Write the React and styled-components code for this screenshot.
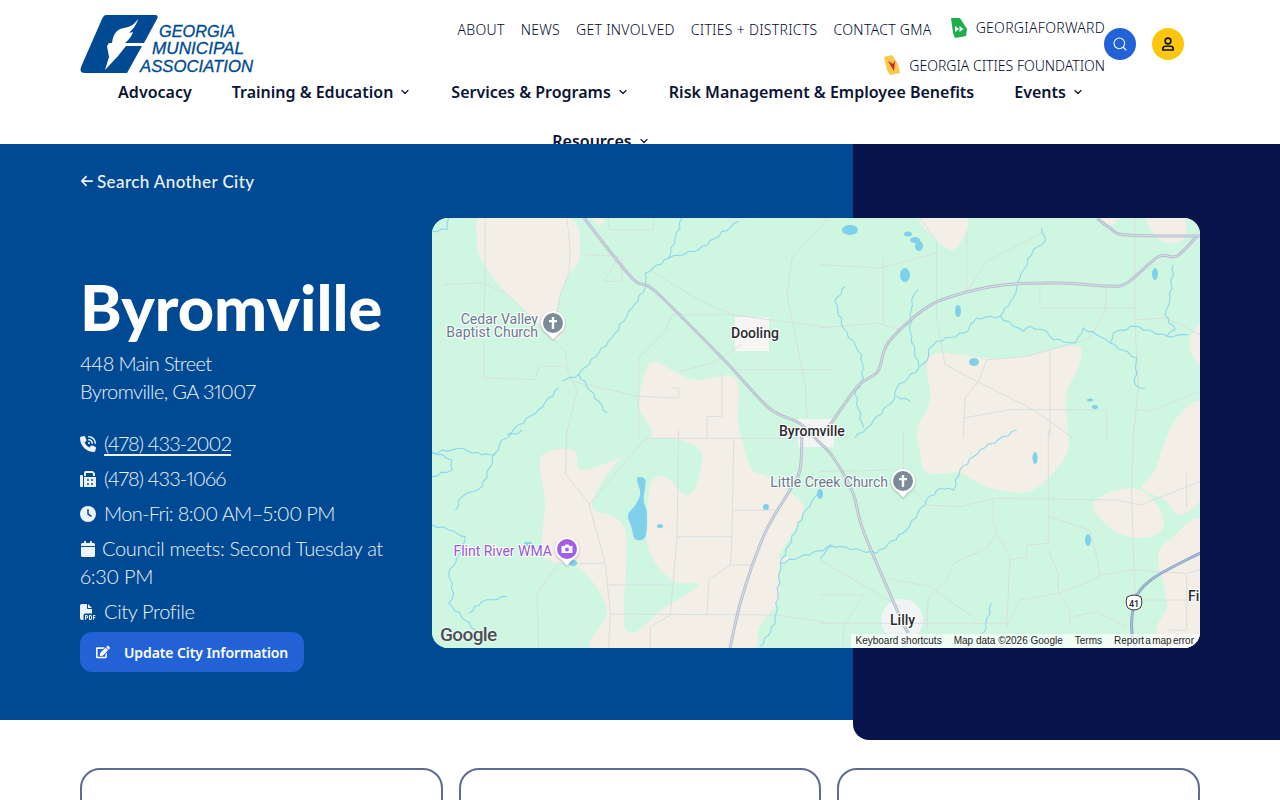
import styled, { createGlobalStyle } from 'styled-components';
import { ChevronDown, Search } from 'lucide-react';
import { FaEdit } from 'react-icons/fa';
import {
  FaArrowLeft,
  FaCalendar,
  FaClock,
  FaFax,
  FaFilePdf,
  FaPhoneVolume,
} from 'react-icons/fa6';

const GlobalStyle = createGlobalStyle`
  html, body {
    margin: 0;
    height: 800px;
    overflow: hidden;
    background: #fff;
    font-family: 'Lato', 'Noto Sans', sans-serif;
  }
  * { box-sizing: border-box; }
`;

const Header = styled.header`
  height: 144px;
  padding: 0 80px;
  background: #fff;
  color: #0a1433;
`;

const TopRow = styled.div`
  display: flex;
  height: 67px;
`;

const LogoLink = styled.a`
  display: block;
  width: 174px;
  height: 59px;
  margin-top: 15px;

  svg {
    overflow: visible;
  }
`;

const Utility = styled.div`
  display: flex;
  flex-wrap: wrap;
  justify-content: flex-end;
  align-content: flex-start;
  column-gap: 16px;
  row-gap: 1px;
  width: 680px;
  margin: 12px 0 0 auto;
`;

const UtilityLink = styled.a`
  display: flex;
  align-items: center;
  gap: 8px;
  height: 35px;
  font-family: 'Noto Sans', sans-serif;
  font-size: 14px;
  font-weight: 300;
  letter-spacing: ${(p) => (p.$snug ? '0' : '0.3px')};
  color: #000a2a;
  text-transform: uppercase;
  white-space: nowrap;
  margin-top: ${(p) => (p.$raised ? '-2px' : '0')};
  padding-left: ${(p) => (p.$raised ? '2px' : '0')};
`;

const Actions = styled.div`
  display: flex;
  gap: 16px;
  margin: 28px 16px 0 -1px;
`;

const RoundButton = styled.button`
  display: flex;
  align-items: center;
  justify-content: center;
  width: 32px;
  height: 32px;
  padding: 0;
  border: none;
  border-radius: 50%;
  background: ${(p) => p.$bg};
  color: ${(p) => p.$fg};
`;

const MainNav = styled.nav`
  display: flex;
  flex-wrap: wrap;
  justify-content: center;
  width: 1042px;
`;

const NavItem = styled.a`
  display: flex;
  align-items: center;
  gap: 6px;
  height: 49px;
  padding: 0 20px;
  font-family: 'Noto Sans', sans-serif;
  font-size: 16px;
  font-weight: 600;
  color: #0a1433;
  white-space: nowrap;
`;

const Hero = styled.section`
  position: relative;
  height: 576px;
  padding: 26px 80px 0;
  background: #004a94;
  color: #eef3fa;
`;

const HeroPanel = styled.div`
  position: absolute;
  top: 0;
  right: 0;
  width: 427px;
  height: 596px;
  background: #08154d;
  border-bottom-left-radius: 16px;
`;

const HeroInner = styled.div`
  position: relative;
`;

const BackLink = styled.a`
  display: flex;
  align-items: center;
  gap: 3px;
  height: 24px;
  padding-bottom: 2px;
  font-size: 17px;
  font-weight: 500;
  letter-spacing: 0.4px;
`;

const HeroGrid = styled.div`
  display: grid;
  grid-template-columns: 320px 768px;
  column-gap: 32px;
  margin-top: 24px;
`;

const CityInfo = styled.div`
  padding-top: 53px;
`;

const CityName = styled.h1`
  margin: 0 0 6px;
  font-size: 63px;
  line-height: 72px;
  font-weight: 900;
  color: #fff;
`;

const Address = styled.p`
  margin: 0 0 24px;
  font-size: 20px;
  line-height: 28px;
  font-weight: 300;
  letter-spacing: -0.6px;
  font-variant-numeric: proportional-nums;
`;

const InfoLine = styled.p`
  margin: 0 0 7px;
  font-size: 20px;
  line-height: 28px;
  font-weight: 300;
  letter-spacing: ${(p) => p.$tracking || -0.35}px;
  font-variant-numeric: proportional-nums;

  svg {
    vertical-align: -1px;
    margin-right: ${(p) => p.$iconGap || 8}px;
  }

  a {
    text-decoration: underline;
    text-underline-offset: 3px;
  }
`;

const UpdateButton = styled.button`
  display: flex;
  align-items: center;
  gap: 14px;
  height: 40px;
  padding: 0 16px;
  border: none;
  border-radius: 12px;
  background: #2362d6;
  color: #fff;
  font-family: 'Noto Sans', sans-serif;
  font-size: 14px;
  font-weight: 600;
  letter-spacing: -0.1px;
`;

const MapFrame = styled.div`
  position: relative;
  width: 768px;
  height: 430px;
  border-radius: 16px;
  overflow: hidden;
  background: #cff6e1;

  > svg {
    display: block;
  }
`;

const GoogleMark = styled.span`
  position: absolute;
  left: 8px;
  bottom: 2px;
  font-family: 'Roboto', sans-serif;
  font-size: 19px;
  font-weight: 500;
  letter-spacing: -0.6px;
  color: #4a4f55;
  text-shadow: 0 0 2px #fff, 0 0 2px #fff;
`;

const Attribution = styled.div`
  position: absolute;
  right: 0;
  bottom: 0;
  display: flex;
  gap: 12px;
  height: 14px;
  padding: 0 6px 0 4px;
  background: rgba(255, 255, 255, 0.7);
  font-family: 'Liberation Sans', sans-serif;
  font-size: 10px;
  line-height: 14px;
  color: #222;
  white-space: nowrap;

  span:last-child {
    word-spacing: -1.5px;
  }
`;

const PinMark = styled.g`
  filter: drop-shadow(0 1px 1px rgba(0, 0, 0, 0.25));
`;

const CardRow = styled.div`
  display: grid;
  grid-template-columns: repeat(3, 1fr);
  gap: 16px;
  margin-top: 48px;
  padding: 0 80px;
`;

const Card = styled.div`
  height: 240px;
  border: 2px solid #5f6b94;
  border-radius: 20px;
  background: #fff;
`;

// closed or open curve through the points (catmull-rom)
const curve = (pts, closed) => {
  const n = pts.length;
  const get = (i) => (closed ? pts[(i + n) % n] : pts[Math.max(0, Math.min(n - 1, i))]);
  let d = `M${pts[0][0]},${pts[0][1]}`;
  const last = closed ? n : n - 1;
  for (let i = 0; i < last; i++) {
    const [p0, p1, p2, p3] = [get(i - 1), get(i), get(i + 1), get(i + 2)];
    const c1 = [p1[0] + (p2[0] - p0[0]) / 6, p1[1] + (p2[1] - p0[1]) / 6];
    const c2 = [p2[0] - (p3[0] - p1[0]) / 6, p2[1] - (p3[1] - p1[1]) / 6];
    d += `C${c1[0].toFixed(1)},${c1[1].toFixed(1)} ${c2[0].toFixed(1)},${c2[1].toFixed(1)} ${p2[0].toFixed(1)},${p2[1].toFixed(1)}`;
  }
  return closed ? d + 'Z' : d;
};

const line = (pts) => 'M' + pts.map((p) => p.join(',')).join('L');

// rivers wander: break each leg in short steps and push them sideways a little
const wander = (pts) => {
  let d = `M${pts[0][0]},${pts[0][1]}`;
  for (let i = 0; i < pts.length - 1; i++) {
    const [a, b] = [pts[i], pts[i + 1]];
    const len = Math.hypot(b[0] - a[0], b[1] - a[1]);
    const steps = Math.max(1, Math.round(len / 5));
    for (let s = 1; s <= steps; s++) {
      const t = s / steps;
      const off = s === steps ? 0 : Math.sin(s * 2.3 + i * 1.7) * 1.3;
      const x = a[0] + (b[0] - a[0]) * t + (-(b[1] - a[1]) / len) * off;
      const y = a[1] + (b[1] - a[1]) * t + ((b[0] - a[0]) / len) * off;
      d += `L${x.toFixed(1)},${y.toFixed(1)}`;
    }
  }
  return d;
};

// traced at 3x: turn crop coordinates into page coordinates
const at = (ox, oy, list) => list.map((pts) => pts.map(([x, y]) => [ox + x / 3, oy + y / 3]));

const beige = [
  [[485, 216], [567, 216], [580, 255], [565, 281], [557, 308], [565, 328], [555, 340], [542, 328], [522, 308], [499, 285], [482, 261], [477, 241]],
  [[639, 405], [650, 363], [672, 370], [695, 380], [735, 378], [738, 420], [742, 440], [752, 470], [768, 477], [802, 503], [798, 523], [779, 557], [790, 557], [779, 570], [779, 600], [760, 625], [740, 655], [596, 655], [607, 610], [582, 570], [555, 563], [542, 550], [545, 503], [540, 460], [555, 450], [575, 451], [585, 470], [650, 440]],
  [[927, 361], [943, 353], [987, 358], [1027, 356], [1077, 346], [1078, 368], [1067, 391], [1067, 418], [1068, 450], [1053, 473], [1027, 492], [987, 487], [960, 473], [927, 473], [920, 450], [917, 430], [930, 400]],
  [[917, 214], [967, 214], [952, 250]],
  [[1148, 214], [1182, 214], [1184, 238], [1167, 243], [1152, 232]],
  [[1097, 214], [1120, 214], [1110, 225]],
  [[1190, 340], [1204, 322], [1204, 362], [1195, 360]],
  [[1093, 507], [1110, 492], [1140, 490], [1160, 510], [1162, 530], [1140, 538], [1113, 530]],
  [[1204, 405], [1175, 420], [1155, 470], [1142, 488], [1165, 500], [1180, 515], [1204, 490]],
  [[1158, 557], [1173, 537], [1204, 525], [1204, 655], [1157, 655], [1157, 627], [1167, 603]],
  [[590, 214], [605, 214], [600, 226]],
];

const greenLobes = [
  [[592, 503], [640, 442], [697, 447], [698, 480], [686, 495], [665, 477], [650, 487], [648, 547], [672, 580], [698, 585], [665, 607], [626, 630], [625, 530]],
];

const minorRoads = [
  ...at(432, 218, [
    [[160, 0], [155, 480], [310, 485], [320, 445], [400, 445]],
    [[35, 200], [150, 195], [220, 225], [270, 270], [360, 360], [400, 400], [405, 450], [435, 520], [400, 660]],
    [[405, 0], [415, 100], [410, 170], [385, 230], [375, 290]],
    [[530, 0], [530, 35], [665, 35], [665, 0]],
    [[450, 110], [560, 115], [515, 190], [570, 190], [570, 115]],
    [[420, 490], [620, 535], [740, 540], [740, 510], [720, 510]],
    [[745, 460], [840, 435], [930, 380]],
    [[660, 160], [790, 240], [900, 290], [1200, 330]],
    [[620, 660], [620, 420], [700, 340], [720, 290], [910, 290]],
    [[1190, 0], [1080, 120], [1065, 230], [1120, 500], [1125, 600]],
    [[915, 455], [1200, 455]],
    [[870, 460], [870, 595], [825, 595], [825, 660]],
  ]),
  ...at(432, 430, [
    [[405, 0], [400, 130], [470, 220], [520, 400], [535, 550], [530, 655]],
    [[475, 220], [640, 25], [1110, 25]],
    [[740, 0], [735, 320], [715, 555], [655, 590], [655, 655]],
    [[905, 30], [900, 320], [895, 405], [830, 450], [825, 555]],
    [[735, 320], [900, 320]],
    [[895, 405], [960, 405]],
    [[905, 240], [1030, 240]],
    [[525, 465], [720, 465]],
    [[535, 552], [1040, 555], [1200, 580]],
    [[320, 655], [315, 490], [380, 400], [515, 400]],
  ]),
  ...at(820, 218, [
    [[300, 0], [350, 70], [350, 300], [375, 440], [470, 490], [640, 575], [760, 660]],
    [[440, 220], [500, 130], [680, 40]],
    [[440, 40], [440, 220]],
    [[190, 120], [190, 320]],
    [[0, 140], [180, 150], [350, 105]],
    [[0, 330], [170, 315], [240, 335]],
    [[660, 200], [660, 270], [945, 270]],
    [[860, 205], [855, 280], [810, 360], [620, 415], [500, 425], [475, 490], [435, 540], [430, 660]],
    [[690, 400], [690, 660]],
    [[945, 0], [945, 320], [955, 510], [940, 660]],
    [[430, 600], [570, 575], [860, 575], [860, 660]],
    [[1140, 520], [990, 580], [945, 575]],
    [[1140, 350], [1040, 300], [950, 305]],
  ]),
  ...at(820, 430, [
    [[250, 210], [250, 0]],
    [[0, 125], [215, 120]],
    [[280, 180], [320, 225], [420, 230], [520, 205], [890, 210], [960, 225], [1140, 155]],
    [[520, 205], [520, 280], [530, 310], [570, 380], [560, 590]],
    [[530, 310], [500, 355], [400, 400], [380, 450], [325, 500], [320, 600]],
    [[685, 0], [685, 340], [620, 345], [620, 380], [570, 390]],
    [[685, 360], [715, 430], [715, 490], [820, 450], [840, 435], [830, 380], [810, 300], [685, 260]],
    [[840, 435], [940, 420], [1100, 430]],
    [[940, 0], [935, 200], [945, 500]],
    [[0, 390], [240, 530]],
    [[200, 445], [330, 470], [470, 570]],
    [[600, 510], [715, 490], [750, 540], [750, 590]],
    [[600, 510], [560, 590]],
    [[0, 495], [130, 495], [70, 590], [70, 650]],
    [[0, 580], [560, 580]],
    [[760, 560], [830, 545], [920, 590]],
    [[950, 510], [1140, 510]],
    [[1100, 130], [1100, 230]],
    [[1140, 420], [1100, 430], [1100, 600], [1045, 600]],
  ]),
];

const streams = [
  ...at(820, 218, [
    [[665, 30], [675, 70], [640, 95], [600, 180], [580, 240], [540, 295], [470, 300], [435, 345], [350, 370], [325, 395], [320, 430], [230, 510], [225, 540], [140, 630], [105, 660]],
    [[540, 295], [580, 325], [610, 340], [630, 325], [680, 340], [700, 365], [765, 375], [790, 330], [830, 350], [870, 375], [950, 420], [945, 500], [975, 512]],
    [[870, 375], [880, 345], [945, 325], [1040, 355], [1105, 350]],
    [[1060, 140], [1050, 240], [1035, 290], [1065, 335], [1040, 355]],
    [[75, 205], [45, 250], [70, 330], [125, 410], [130, 480], [105, 530], [130, 630]],
    [[295, 215], [275, 245], [270, 340], [295, 445]],
    [[230, 535], [270, 550]],
  ]),
  ...at(820, 430, [
    [[590, 0], [480, 60], [420, 120], [400, 180], [360, 175], [320, 210], [260, 300], [170, 370], [30, 345], [0, 385]],
    [[515, 520], [490, 610]],
  ]),
  ...at(432, 218, [
    [[750, 0], [710, 120], [800, 95], [920, 10]],
    [[710, 120], [640, 165], [640, 210], [600, 270], [540, 360], [440, 470], [390, 490]],
    [[440, 470], [525, 585]],
    [[380, 510], [320, 575], [225, 650]],
    [[0, 40], [45, 35], [50, 0]],
  ]),
  ...at(432, 430, [
    [[0, 285], [50, 300], [100, 320], [85, 370], [50, 430], [65, 490], [50, 520], [130, 600]],
    [[110, 550], [150, 515], [225, 500]],
    [[0, 140], [60, 120], [60, 90], [0, 65]],
    [[0, 70], [80, 55], [150, 75], [190, 70], [210, 30], [270, 0]],
    [[70, 240], [90, 200], [150, 170], [190, 70]],
    [[985, 650], [1030, 580], [1045, 400], [1120, 240], [1160, 190]],
    [[1045, 400], [1200, 350]],
  ]),
];

const lake = at(432, 430, [[[615, 145], [640, 150], [635, 210], [645, 250], [640, 320], [610, 328], [598, 290], [588, 255], [610, 225], [625, 190]]])[0];

const ponds = [
  [850, 230, 8, 5], [908, 234, 4, 2.5], [915, 240, 5, 3], [919, 246, 4, 5], [905, 275, 5, 7], [958, 311, 3, 6], [974, 362, 5, 4],
  [1035, 458, 2.5, 6], [1088, 540, 3, 6], [1155, 274, 3, 6], [1090, 400, 3, 1.5], [1095, 407, 3, 2],
  [640, 535, 2, 2], [528, 544, 4, 2], [573, 563, 4, 3], [660, 526, 3, 2], [766, 507, 3, 3], [820, 494, 3, 5],
];

const majorRoad = [[584, 218], [632, 278], [655, 291], [725, 361], [769, 408], [799, 423], [820, 443], [833, 457], [853, 493], [863, 530], [897, 610], [908, 633]];
const eastRoad = [[830, 425], [858, 386], [878, 371], [888, 343], [923, 310], [953, 296], [1003, 285], [1060, 283], [1107, 286], [1127, 283], [1158, 257], [1177, 256], [1197, 236]];
const northRoad = [[1200, 236], [1127, 235], [1110, 228], [1097, 218]];
const southRoad = [[802, 430], [800, 470], [790, 490], [765, 533], [742, 597], [730, 648]];
const usRoad = [[1200, 553], [1155, 577], [1137, 595], [1132, 617], [1132, 633], [1135, 647]];

const Highway = ({ d, outer = '#b4bdcd', inner = '#dfe3ea' }) => (
  <>
    <path d={d} fill="none" stroke={outer} strokeWidth="3" />
    <path d={d} fill="none" stroke={inner} strokeWidth="1" />
  </>
);

const Pin = ({ x, y, color, children }) => (
  <PinMark transform={`translate(${x} ${y})`}>
    <path d="M-8,8 L0,16.5 L8,8Z" fill="#fff" />
    <circle r="12" fill="#fff" />
    <circle r="10" fill={color} />
    {children}
  </PinMark>
);

const labelStyle = { fontFamily: 'Roboto, sans-serif', paintOrder: 'stroke', stroke: '#fff', strokeWidth: 2, strokeLinejoin: 'round' };

const MapDrawing = () => (
  <svg width="768" height="430" viewBox="432 218 768 430">
    <rect x="432" y="218" width="768" height="430" fill="#cff6e1" />
    {beige.map((pts, i) => <path key={i} d={curve(pts, true)} fill="#f4efe6" />)}
    {greenLobes.map((pts, i) => <path key={i} d={curve(pts, true)} fill="#cff6e1" />)}
    <rect x="735" y="317" width="34" height="34" fill="#f6f5f3" />
    <rect x="798" y="419" width="36" height="28" fill="#f3f4f3" />
    <circle cx="902" cy="620" r="21" fill="#f1f4f4" />
    {minorRoads.map((pts, i) => <path key={i} d={line(pts)} fill="none" stroke="#d8dfdf" strokeWidth="1" />)}
    {streams.map((pts, i) => <path key={i} d={wander(pts)} fill="none" stroke="#8cd6ec" strokeWidth="1.1" />)}
    {ponds.map(([cx, cy, rx, ry], i) => <ellipse key={i} cx={cx} cy={cy} rx={rx} ry={ry} fill="#7fd0ea" />)}
    <path d={curve(lake, true)} fill="#7fd0ea" />
    <Highway d={curve(majorRoad)} />
    <Highway d={curve(eastRoad)} />
    <Highway d={curve(northRoad)} />
    <Highway d={curve(southRoad)} />
    <Highway d={curve(usRoad)} outer="#8ea4c6" inner="#b6c4da" />

    <Pin x={553} y={323} color="#7b8b9a">
      <path d="M-1.2,-6H1.2V-3H4V-.8H1.2V6H-1.2V-.8H-4V-3H-1.2Z" fill="#fff" />
    </Pin>
    <Pin x={903} y={481} color="#7b8b9a">
      <path d="M-1.2,-6H1.2V-3H4V-.8H1.2V6H-1.2V-.8H-4V-3H-1.2Z" fill="#fff" />
    </Pin>
    <Pin x={567} y={549} color="#a45ee5">
      <path d="M-5.5,-3H-2.5L-1.5,-4.5H1.5L2.5,-3H5.5V4H-5.5Z" fill="#fff" />
      <circle cy=".5" r="2" fill="#a45ee5" />
    </Pin>

    <text x="538" y="324" textAnchor="end" fontSize="14" fill="#667a8c" style={labelStyle}>Cedar Valley</text>
    <text x="538" y="337" textAnchor="end" fontSize="14" fill="#667a8c" style={labelStyle}>Baptist Church</text>
    <text x="888" y="487" textAnchor="end" fontSize="14" fill="#667a8c" style={labelStyle}>Little Creek Church</text>
    <text x="552" y="556" textAnchor="end" fontSize="14" fill="#9457d6" style={labelStyle}>Flint River WMA</text>
    <text x="731" y="338" fontSize="14" fontWeight="500" fill="#2b2b2f" style={labelStyle}>Dooling</text>
    <text x="779" y="436" fontSize="14" fontWeight="500" fill="#2b2b2f" style={labelStyle}>Byromville</text>
    <text x="890" y="625" fontSize="14" fontWeight="500" fill="#2b2b2f" style={labelStyle}>Lilly</text>
    <text x="1188" y="601" fontSize="14" fontWeight="500" fill="#2b2b2f" style={labelStyle}>Fi</text>

    <path d="M1127,597Q1134,593 1141,597Q1143,604 1140,608Q1134,612 1128,608Q1125,604 1127,597Z" fill="#fff" stroke="#333" strokeWidth="1" />
    <text x="1134" y="607" textAnchor="middle" fontSize="9" fontWeight="500" fill="#222" fontFamily="Roboto, sans-serif">41</text>
  </svg>
);

const GmaLogo = () => (
  <svg width="174" height="59" viewBox="0 0 174 59">
    <path d="M26,0H75Q79,0 77,4L64,28H29L27,31H62L47,58H5Q-1,58 1,52L22,4Q24,0 26,0Z" fill="#004a94" />
    <path d="M58,4C54,10 50,12 44,13C37,14 33,19 32,28H45C50,24 52,20 53,17L49,18C53,14 57,9 58,4Z" fill="#fff" />
    <path d="M27,31H46L38,41L25,55L29,42Z" fill="#fff" />
    <g fontFamily="'Liberation Sans', sans-serif" fontStyle="italic" fontSize="16" fill="#004a94" stroke="#004a94" strokeWidth="0.3">
      <text x="79" y="21.7" textLength="76" lengthAdjust="spacingAndGlyphs">GEORGIA</text>
      <text x="72" y="39" textLength="92" lengthAdjust="spacingAndGlyphs">MUNICIPAL</text>
      <text x="60" y="57" textLength="113" lengthAdjust="spacingAndGlyphs">ASSOCIATION</text>
    </g>
  </svg>
);

const ForwardIcon = () => (
  <svg width="18" height="20" viewBox="0 0 18 20">
    <path d="M1,0H10L17,11L16,18L5,20L3,15Z" fill="#1fae4b" />
    <path d="M5,8L9,11L5,14ZM9.5,8L13.5,11L9.5,14Z" fill="#fff" />
  </svg>
);

const FoundationIcon = () => (
  <svg width="18" height="21" viewBox="0 0 18 21">
    <path d="M1,2L9,0L15,9L17,18L7,20L4,15Z" fill="#fbc84a" />
    <path d="M5,6L10,9L12,5L11,16Z" fill="#d91f26" />
  </svg>
);

const PersonIcon = () => (
  <svg width="16" height="16" viewBox="0 0 16 16" fill="none" stroke="currentColor" strokeWidth="1.6">
    <circle cx="8" cy="5" r="2.9" />
    <path d="M2.8,14V12.8A2.6,2.6 0 0 1 5.4,10.2H10.6A2.6,2.6 0 0 1 13.2,12.8V14Z" strokeLinejoin="round" />
  </svg>
);

const Chevron = () => <ChevronDown size={12} strokeWidth={2.4} />;

const App = () => (
  <>
    <GlobalStyle />
    <Header>
      <TopRow>
        <LogoLink>
          <GmaLogo />
        </LogoLink>
        <Utility>
          <UtilityLink>About</UtilityLink>
          <UtilityLink>News</UtilityLink>
          <UtilityLink>Get Involved</UtilityLink>
          <UtilityLink>Cities + Districts</UtilityLink>
          <UtilityLink>Contact GMA</UtilityLink>
          <UtilityLink $raised>
            <ForwardIcon />
            GeorgiaForward
          </UtilityLink>
          <UtilityLink $snug>
            <FoundationIcon />
            Georgia Cities Foundation
          </UtilityLink>
        </Utility>
        <Actions>
          <RoundButton $bg="#2362d6" $fg="#fff">
            <Search size={16} strokeWidth={1.6} />
          </RoundButton>
          <RoundButton $bg="#fdc60b" $fg="#0a1433">
            <PersonIcon />
          </RoundButton>
        </Actions>
      </TopRow>
      <MainNav>
        <NavItem>Advocacy</NavItem>
        <NavItem>Training &amp; Education <Chevron /></NavItem>
        <NavItem>Services &amp; Programs <Chevron /></NavItem>
        <NavItem>Risk Management &amp; Employee Benefits</NavItem>
        <NavItem>Events <Chevron /></NavItem>
        <NavItem>Resources <Chevron /></NavItem>
      </MainNav>
    </Header>

    <Hero>
      <HeroPanel />
      <HeroInner>
        <BackLink>
          <FaArrowLeft size={14} />
          Search Another City
        </BackLink>
        <HeroGrid>
          <CityInfo>
            <CityName>Byromville</CityName>
            <Address>
              448 Main Street
              <br />
              Byromville, GA 31007
            </Address>
            <InfoLine $tracking={-0.9}>
              <FaPhoneVolume size={16} />
              <a>(478) 433-2002</a>
            </InfoLine>
            <InfoLine $tracking={-0.9}>
              <FaFax size={16} />
              (478) 433-1066
            </InfoLine>
            <InfoLine $tracking={-0.65}>
              <FaClock size={16} />
              Mon-Fri: 8:00 AM–5:00 PM
            </InfoLine>
            <InfoLine $iconGap={6}>
              <FaCalendar size={16} />
              Council meets: Second Tuesday at 6:30 PM
            </InfoLine>
            <InfoLine>
              <FaFilePdf size={16} />
              City Profile
            </InfoLine>
            <UpdateButton>
              <FaEdit size={14} />
              Update City Information
            </UpdateButton>
          </CityInfo>
          <MapFrame>
            <MapDrawing />
            <GoogleMark>Google</GoogleMark>
            <Attribution>
              <span>Keyboard shortcuts</span>
              <span>Map data ©2026 Google</span>
              <span>Terms</span>
              <span>Report a map error</span>
            </Attribution>
          </MapFrame>
        </HeroGrid>
      </HeroInner>
    </Hero>

    <CardRow>
      <Card />
      <Card />
      <Card />
    </CardRow>
  </>
);

export default App;
